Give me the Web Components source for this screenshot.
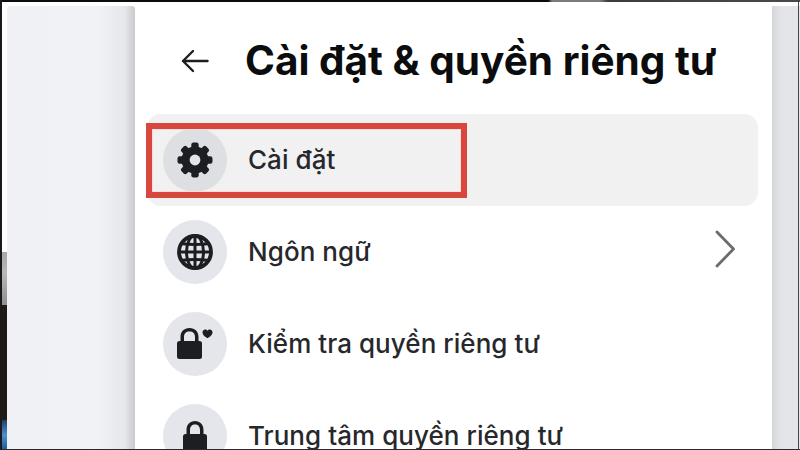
<!DOCTYPE html>
<html lang="vi"><head><meta charset="utf-8">
<style>
html,body{margin:0;padding:0;width:800px;height:450px;overflow:hidden;background:#fff}
body{font-family:"Inter","Liberation Sans",sans-serif}
</style></head><body>
<script>
const ICONS={
gear:`<svg viewBox="0 0 36 36" width="36" height="36" aria-hidden="true"><g fill="#1c1e21"><circle cx="18" cy="18" r="13.500"/><rect x="14.300" y="0.500" width="7.400" height="35" rx="2.200"/><rect x="14.300" y="0.500" width="7.400" height="35" rx="2.200" transform="rotate(45 18 18)"/><rect x="14.300" y="0.500" width="7.400" height="35" rx="2.200" transform="rotate(90 18 18)"/><rect x="14.300" y="0.500" width="7.400" height="35" rx="2.200" transform="rotate(135 18 18)"/></g><circle cx="18" cy="18" r="5.400" fill="#e2e4e8"/></svg>`,
globe:`<svg viewBox="0 0 36 36" width="36" height="36" aria-hidden="true"><g fill="none" stroke="#1c1e21"><g stroke-width="3"><path d="M18 1V35M1 18H35"/><ellipse cx="18" cy="18" rx="8.500" ry="16.500"/><path d="M3.500 9.500Q18 11.500 32.500 9.500M3.500 26.500Q18 24.500 32.500 26.500"/></g><circle cx="18" cy="18" r="16" stroke-width="3.800"/></g></svg>`,
lockheart:`<svg viewBox="-18 -16 36 32" width="36" height="32" aria-hidden="true"><path fill="#1c1e21" fill-rule="evenodd" d="M-18-.5A2.500 2.500 0 0 1-15.500-3H-14.500V-7C-14.500-12.500-11-16-5.500-16S3.500-12.500 3.500-7V-3H4.500A2.500 2.500 0 0 1 7-.5V12.500A2.500 2.500 0 0 1 4.500 15H-15.500A2.500 2.500 0 0 1-18 12.500ZM-11-3H0V-7C-0-10.500-2-12.500-5.500-12.500S-11-10.500-11-7Z"/><path fill="#1c1e21" d="M17.500-11.500C17.500-13.200 16.200-14.500 14.700-14.500 13.800-14.500 13-14 12.500-13.300 12-14 11.200-14.500 10.300-14.500 8.800-14.500 7.500-13.200 7.500-11.500 7.500-9 10.800-6.700 12.500-5.800 14.200-6.700 17.500-9 17.500-11.500Z"/></svg>`,
lock:`<svg viewBox="-13 -14 26 30" width="26" height="30" aria-hidden="true"><path fill="#1c1e21" fill-rule="evenodd" d="M-12 1.500A2.500 2.500 0 0 1-9.500-1H-8.500V-5C-8.500-10.500-5-14 0-14S8.500-10.500 8.500-5V-1H9.500A2.500 2.500 0 0 1 12 1.500V16H-12ZM-5-1H5V-5C5-8.500 3-10.500 0-10.500S-5-8.500-5-5Z"/></svg>`
};
function def(name,html){customElements.define(name,class extends HTMLElement{constructor(){super();this.attachShadow({mode:"open"}).innerHTML=html}})}
def("fb-page",`<style>
:host{display:grid;grid-template-columns:7px 128px 637px 28px;width:800px;height:450px;position:relative;overflow:hidden;background:#fff}
.edge-top{position:absolute;left:0;right:0;top:0;height:1.500px;background:linear-gradient(90deg,#0c0c0c 0,#0c0c0c 68.500%,#7c7c7c 69%,#7c7c7c 75%,#3c3c3c 76%,#4a4a4a 100%)}
.edge-bot{position:absolute;left:0;right:0;bottom:0;height:1.500px;background:#2a2a2a}
.edge-l{position:absolute;left:0;top:0;bottom:0;width:1.500px;background:#1a1a1a}
.edge-r{position:absolute;right:1px;top:0;bottom:0;width:1px;background:#444}
.strip{display:flex;flex-direction:column}
.s1{height:252px;background:#fff}.s2{height:53px;background:linear-gradient(#a8a8a8,#b8b8b8 40%,#8f8f8f)}.s3{height:115px;background:#211a14}.s4{flex:1;background:linear-gradient(#1d3e68,#4d8fd0 50%,#1d5c94)}
.left{margin-top:6px;background:linear-gradient(90deg,#eff1f4 0,#f1f2f6 70%,#e6e7ea 92%,#c9cacc 100%);border-radius:3px 3px 0 0}
.card{background:#fff;box-sizing:border-box;padding:0 14px 0 12px;overflow:hidden}
.right{margin-top:6px;background:linear-gradient(90deg,#d5d6d9,#e2e4e7 30%,#e4e6e9)}
</style>
<div class="strip"><div class="s1"></div><div class="s2"></div><div class="s3"></div><div class="s4"></div></div>
<div class="left"></div><div class="card"><slot></slot></div><div class="right"></div>
<div class="edge-top"></div><div class="edge-bot"></div><div class="edge-l"></div><div class="edge-r"></div>`);
def("fb-header",`<style>
:host{display:flex;align-items:center;height:114px;padding:8px 0 0 34px;box-sizing:border-box;color:#0b0c0e}
svg{flex:none;margin-right:36px}
h1{margin:0;font:700 40.500px/48px "Inter","Liberation Sans",sans-serif;white-space:nowrap}
</style><svg width="28" height="24" viewBox="0 0 28 24"><path d="M26.500 12H2M12 2 2 12l10 10" fill="none" stroke="#1c1e21" stroke-width="2.400" stroke-linecap="round" stroke-linejoin="round"/></svg><h1><slot></slot></h1>`);
def("fb-row",`<style>
:host{display:flex;align-items:center;height:92px;border-radius:14px;padding:0 22px 0 16px;box-sizing:border-box;color:#26282c}
:host([active]){background:#f1f1f2}
.c{width:64px;height:64px;border-radius:50%;background:#e4e6eb;display:grid;place-items:center;flex:none;margin-right:21px}
:host([active]) .c{background:#dddfe3}
.t{flex:1;font:450 26px/32px "Inter","Liberation Sans",sans-serif;letter-spacing:.05px;white-space:nowrap}
.a{display:none;margin-top:-7px}:host([chevron]) .a{display:block}
</style><div class="c"></div><div class="t"><slot></slot></div><svg class="a" width="22" height="38" viewBox="0 0 22 38"><path d="M3 2 19.500 19 3 36" fill="none" stroke="#6a6c70" stroke-width="2.800" stroke-linecap="round" stroke-linejoin="round"/></svg>`);
def("fb-highlight",`<style>
:host{position:absolute;left:146px;top:123px;width:321px;height:75px;box-sizing:border-box;border:6px solid #d8473d;box-shadow:inset 0 0 0 1px #fbdcd8;pointer-events:none}
</style>`);
</script>
<fb-page>
<fb-header>Cài đặt &amp; quyền riêng tư</fb-header>
<fb-row active data-i="gear">Cài đặt</fb-row>
<fb-row chevron data-i="globe">Ngôn ngữ</fb-row>
<fb-row data-i="lockheart">Kiểm tra quyền riêng tư</fb-row>
<fb-row data-i="lock">Trung tâm quyền riêng tư</fb-row>
<fb-highlight></fb-highlight>
</fb-page>
<script>
document.querySelectorAll("fb-row").forEach(r=>{r.shadowRoot.querySelector(".c").innerHTML=ICONS[r.dataset.i]});
</script>
</body></html>
